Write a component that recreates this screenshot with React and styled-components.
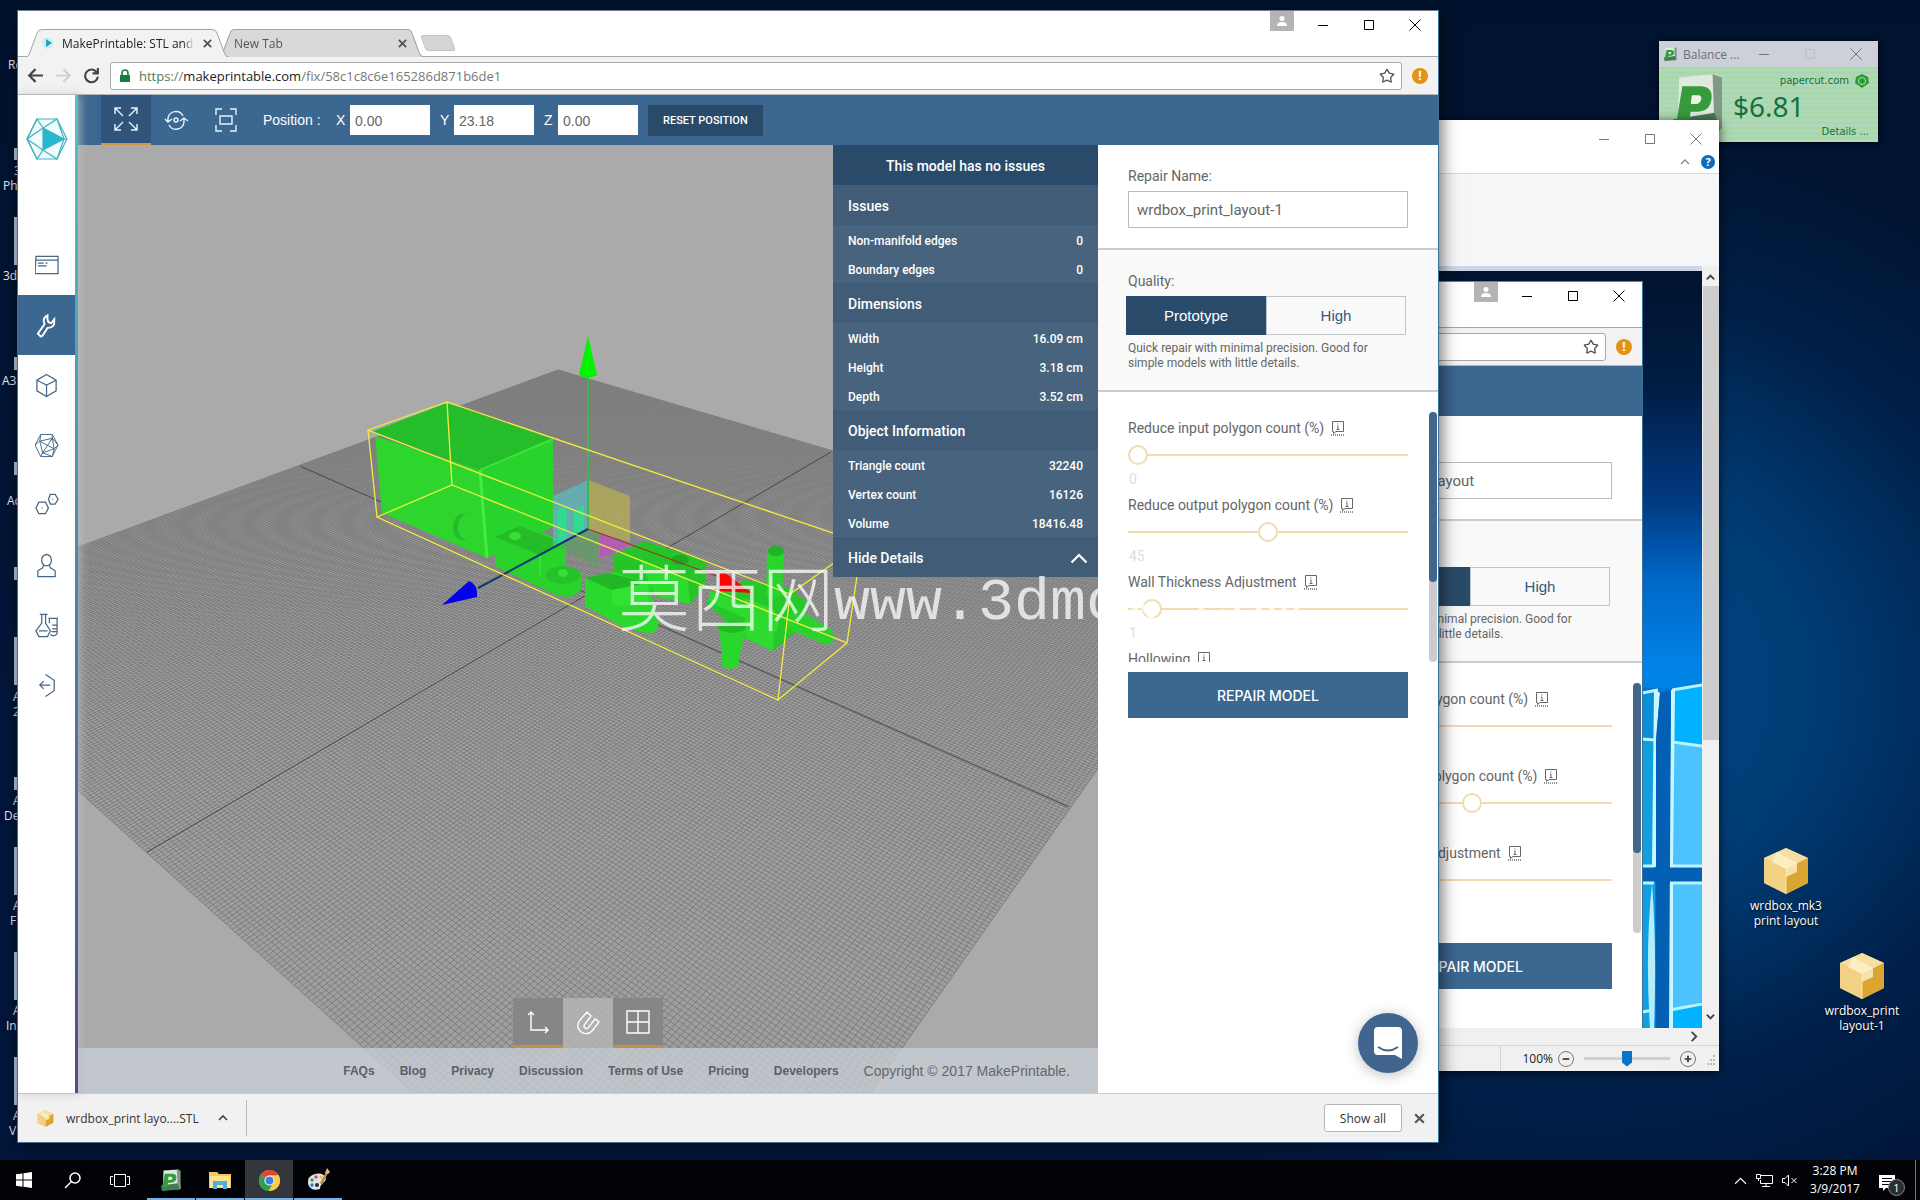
import React, { useId, useState } from 'react';
import styled, { createGlobalStyle, css } from 'styled-components';
import { Star } from 'lucide-react';

const GlobalStyle = createGlobalStyle`
  * { box-sizing: border-box; }
  body { margin: 0; overflow: hidden; }
  button, input { font-family: inherit; margin: 0; }
  button { border: 0; padding: 0; background: none; cursor: pointer; color: inherit; }
  svg { display: block; flex: none; }
`;

/* ---------- desktop ---------- */

const Desktop = styled.div`
  min-height: 100vh;
  display: flex;
  flex-direction: column;
  font-family: 'Open Sans', 'Noto Sans', sans-serif;
  background:
    radial-gradient(ellipse 620px 560px at 82% 57%, #004a8c 0%, rgba(0, 66, 126, 0.85) 40%, rgba(0, 44, 94, 0.45) 72%, rgba(0, 30, 70, 0) 100%),
    linear-gradient(180deg, #00132e 0%, #00163a 60%, #00163a 100%);
`;

const Workspace = styled.div`
  position: relative;
  flex: 1;
  overflow: hidden;
`;

const Shortcut = styled.div`
  position: absolute;
  left: ${(p) => p.$x}px;
  top: ${(p) => p.$y}px;
  width: 90px;
  display: flex;
  flex-direction: column;
  align-items: center;
  gap: 3px;
  color: #fff;
  font-size: 12px;
  line-height: 15px;
  text-align: center;
  text-shadow: 0 1px 2px #000;
`;

const CutLabel = styled.div`
  position: absolute;
  left: ${(p) => p.$x}px;
  top: ${(p) => p.$y}px;
  color: #e8eef5;
  font-size: 12px;
  line-height: 16px;
  white-space: nowrap;
`;

const IconSliver = styled.div`
  position: absolute;
  left: 14px;
  top: ${(p) => p.$y}px;
  width: 4px;
  height: ${(p) => p.$h}px;
  background: #b9cbe0;
`;

const labels = [
  [8, 57, 'Re'], [14, 163, '3'], [3, 178, 'Ph'], [3, 268, '3d'], [2, 373, 'A3'], [7, 493, 'Ac'],
  [13, 689, 'A'], [13, 704, '2'], [13, 793, 'A'], [4, 808, 'De'], [13, 898, 'A'], [10, 913, 'F'],
  [13, 1003, 'A'], [6, 1018, 'In'], [13, 1108, 'A'], [9, 1123, 'V'],
];

const slivers = [[148, 12], [217, 48], [357, 13], [462, 13], [567, 13], [637, 48], [777, 13], [847, 48], [952, 48], [1057, 48]];

function BoxIcon({ size = 48 }) {
  return (
    <svg width={size} height={size} viewBox="0 0 48 48">
      <path d="M24 1 46 11V36L24 47 2 36V11Z" fill="#e8b94c" />
      <path d="M24 1 46 11 24 22 2 11Z" fill="#f6dfa0" />
      <path d="M2 11 24 22V47L2 36Z" fill="#f3d184" />
      <path d="M24 22 46 11V36L24 47Z" fill="#dba531" />
      <path d="M15 5 35 16V25L24 30V22L10 15Z" fill="#fdf1c9" opacity=".8" />
      <path d="M24 22V47" stroke="#fbe6ae" strokeWidth="1" />
    </svg>
  );
}

/* ---------- balance widget ---------- */

const Balance = styled.section`
  position: absolute;
  right: 42px;
  top: 41px;
  width: 219px;
  height: 101px;
  background: #a9d8ae;
  color: #14713f;
  font-family: 'DejaVu Sans', sans-serif;
  box-shadow: 0 1px 5px #000;
`;

const BalanceTitle = styled.header`
  display: flex;
  align-items: center;
  height: 26px;
  padding: 0 16px 0 5px;
  background: #ccd0d8;
  color: #6a7078;
  font: 12px 'Open Sans', sans-serif;
`;

const BalanceName = styled.span`
  flex: 1;
  padding-left: 6px;
`;

const BalanceBody = styled.div`
  display: grid;
  grid-template-columns: 60px 1fr;
  height: 75px;
  padding: 6px 9px 4px 14px;
  background: repeating-linear-gradient(180deg, #a4dba4 0 2px, #b2d6bb 2px 5px);
`;

const BalanceInfo = styled.div`
  display: flex;
  flex-direction: column;
`;

const BalanceLink = styled.a`
  display: flex;
  align-items: center;
  justify-content: flex-end;
  gap: 6px;
  color: #14713f;
  font-size: 10px;
  line-height: 16px;
  text-decoration: none;
`;

const BalanceAmount = styled.strong`
  font: 400 28px 'Noto Sans', sans-serif;
  line-height: 35px;
`;

function PaperIcon({ size, height }) {
  return (
    <svg width={size} height={height || size} viewBox="0 0 48 56" preserveAspectRatio="none">
      <path d="M6 4 42 1 47 50 4 55Z" fill="#dfe9dd" />
      <path d="M38 1 47 4V50L40 54Z" fill="#7d9a84" />
      <path d="M0 42 40 36 45 52 2 56Z" fill="#447c55" />
      <path d="M9 12H26Q38 12 37 23T24 35H17L15 46H3Z" fill="#379a3c" />
      <path d="M18 20H24Q28 20 27 24T22 28H17Z" fill="#e9f3e6" />
    </svg>
  );
}

/* ---------- window buttons ---------- */

const WinButtons = styled.div`
  display: flex;
  gap: ${(p) => p.$gap || 34}px;
  color: ${(p) => p.$color || '#000'};
`;

function Glyph({ d, size = 12, stroke = 1, color = 'currentColor', box = 12 }) {
  return (
    <svg width={size} height={size} viewBox={`0 0 ${box} ${box}`} fill="none" stroke={color} strokeWidth={stroke}>
      <path d={d} />
    </svg>
  );
}

function Controls({ color, gap, faded }) {
  return (
    <WinButtons $color={color} $gap={gap}>
      <button aria-label="Minimize"><Glyph d="M1 6.5H11" /></button>
      <button aria-label="Maximize"><Glyph d="M1.5 1.5H10.500V10.500H1.500Z" color={faded ? '#b9bec6' : 'currentColor'} /></button>
      <button aria-label="Close"><Glyph d="M.5 .5 11.500 11.500M11.500 .5 .5 11.500" /></button>
    </WinButtons>
  );
}

/* ---------- browser frame ---------- */

const Browser = styled.section`
  position: absolute;
  display: flex;
  flex-direction: column;
  background: #fff;
  border: 1px solid #3b7197;
  border-top-color: #6e7f92;
  overflow: hidden;
  ${(p) => p.$main ? css`
    left: 17px;
    right: 481px;
    top: 10px;
    bottom: 17px;
  ` : css`
    right: 59px;
    top: 10px;
    width: 540px;
    height: 1133px;
  `}
`;

const BrowserShadow = styled.div`
  position: absolute;
  left: 17px;
  right: 481px;
  top: 10px;
  bottom: 17px;
  box-shadow: 2px 2px 16px rgba(0, 0, 0, 0.6);
`;

const TabStrip = styled.header`
  display: flex;
  justify-content: space-between;
  height: 46px;
  border-bottom: 1px solid #a6a6a6;
`;

const Tabs = styled.div`
  display: flex;
  align-items: flex-end;
  padding-left: 7px;
`;

const TabBox = styled.div`
  position: relative;
  width: ${(p) => (p.$active ? 204 : 206)}px;
  height: 28px;
  margin: 0 -11px -1px 0;
  z-index: ${(p) => (p.$active ? 2 : 1)};
  display: flex;
  align-items: center;
  padding: 0 16px 0 16px;
  gap: 8px;
  font-size: 12px;
  color: ${(p) => (p.$active ? '#222' : '#555')};
`;

const TabShape = styled.svg`
  position: absolute;
  inset: 0;
  width: 100%;
  height: 100%;
`;

const TabText = styled.span`
  position: relative;
  flex: 1;
  overflow: hidden;
  white-space: nowrap;
  mask-image: linear-gradient(90deg, #000 92%, transparent);
`;

const TabIcon = styled.span`
  position: relative;
`;

const NewTab = styled.button`
  width: 30px;
  height: 16px;
  margin: 0 0 5px 10px;
  background: #d5d5d5;
  border: 1px solid #c2c2c2;
  border-radius: 3px;
  transform: skewX(20deg);
`;

const FrameRight = styled.div`
  display: flex;
  align-items: flex-start;
  padding-right: 17px;
`;

const Person = styled.button`
  display: grid;
  place-items: center;
  width: 24px;
  height: 20px;
  margin-right: 23px;
  background: #b4b4b4;
`;

const ControlSlot = styled.div`
  padding-top: 8px;
`;

const AddressBar = styled.div`
  display: flex;
  align-items: center;
  height: 38px;
  padding: 0 10px 0 9px;
  gap: 10px;
  background: #f2f2f2;
  border-bottom: 1px solid #b0b6bb;
`;

const NavButtons = styled.div`
  display: flex;
  align-items: center;
  gap: 11px;
  color: #444;
`;

const UrlField = styled.div`
  flex: 1;
  display: flex;
  align-items: center;
  gap: 8px;
  height: 28px;
  padding: 0 6px 0 8px;
  background: #fff;
  border: 1px solid #a8a8a8;
  border-radius: 3px;
  font-size: 13px;
  color: #777;
`;

const Url = styled.a`
  flex: 1;
  color: #777;
  text-decoration: none;
  white-space: nowrap;
  b { font-weight: 400; color: #222; }
  i { font-style: normal; color: #4d7a5d; }
`;

const Extension = styled.button`
  width: 16px;
  height: 16px;
  border-radius: 50%;
  background: #e39316;
  color: #fff;
  font-size: 12px;
  font-weight: 700;
  line-height: 16px;
`;

function Tab({ title, active }) {
  return (
    <TabBox $active={active}>
      <TabShape viewBox="0 0 204 28" preserveAspectRatio="none">
        <path d="M0 28 C3 28 4 26 5 23L12 4Q13 .5 17 .5H187Q191 .5 192 4L199 23C200 26 201 28 204 28" fill={active ? '#f2f2f2' : '#d9d9d9'} stroke="#a3a3a3" />
      </TabShape>
      {active && (
        <TabIcon>
          <svg width="13" height="14" viewBox="0 0 13 14"><circle cx="6.500" cy="7" r="6" fill="#cdeef5" /><path d="M5 3 11 7 5 11Z" fill="#1fa3bd" /></svg>
        </TabIcon>
      )}
      <TabText>{title}</TabText>
      <TabIcon as="button" aria-label={`Close ${title}`}><Glyph d="M2 2 10 10M10 2 2 10" size={11} stroke={2} color="#555" /></TabIcon>
    </TabBox>
  );
}

function BrowserTop({ full }) {
  return (
    <>
      <TabStrip>
        <Tabs>
          {full && (
            <>
              <Tab title="MakePrintable: STL and 3" active />
              <Tab title="New Tab" />
              <NewTab aria-label="New tab" />
            </>
          )}
        </Tabs>
        <FrameRight>
          <Person aria-label="Profile">
            <svg width="12" height="12" viewBox="0 0 12 12" fill="#fff"><circle cx="6" cy="3.500" r="2.500" /><path d="M1 11Q1 7 6 7T11 11Z" /></svg>
          </Person>
          <ControlSlot><Controls /></ControlSlot>
        </FrameRight>
      </TabStrip>
      <AddressBar>
        {full && (
          <NavButtons>
            <button aria-label="Back"><Glyph d="M15 8H2M8 2 2 8 8 14" box={16} size={17} stroke={2} /></button>
            <button aria-label="Forward"><Glyph d="M1 8H14M8 2 14 8 8 14" box={16} size={17} stroke={2} color="#d0d0d0" /></button>
            <button aria-label="Reload"><Glyph d="M13 5A6 6 0 1 0 14 9M14 1V6H9" box={16} size={17} stroke={2} /></button>
          </NavButtons>
        )}
        <UrlField>
          {full && (
            <svg width="12" height="14" viewBox="0 0 12 14"><path d="M1 6H11V13H1Z" fill="#128043" /><path d="M3 6V4A3 3 0 0 1 9 4V6" fill="none" stroke="#128043" strokeWidth="1.600" /></svg>
          )}
          <Url href="#fix">{full && <><i>https</i>://<b>makeprintable.com</b>/fix/58c1c8c6e165286d871b6de1</>}</Url>
          <button aria-label="Bookmark"><Star size={16} color="#555" /></button>
        </UrlField>
        <Extension aria-label="Extension">!</Extension>
      </AddressBar>
    </>
  );
}

/* ---------- repair panel ---------- */

const Panel = styled.aside`
  width: 340px;
  flex: none;
  background: #fff;
  color: #666;
  font-family: Roboto, sans-serif;
`;

const PanelSection = styled.div`
  padding: 22px 30px 20px;
  border-bottom: 2px solid #ccc;
  background: ${(p) => (p.$shade ? '#f9f9f9' : '#fff')};
`;

const FieldLabel = styled.label`
  display: flex;
  align-items: center;
  gap: 7px;
  font-size: 14px;
  line-height: 18px;
`;

const NameInput = styled.input`
  display: block;
  width: 100%;
  height: 37px;
  margin-top: 6px;
  padding: 0 8px;
  border: 1px solid #bbb;
  color: #666;
  font-size: 15px;
`;

const Choice = styled.div`
  display: grid;
  grid-template-columns: 1fr 1fr;
  height: 39px;
  margin: 6px 2px 6px -2px;
`;

const ChoiceButton = styled.button`
  border: 1px solid ${(p) => (p.$on ? '#294b69' : '#bfc5ca')};
  background: ${(p) => (p.$on ? '#294b69' : '#f9f9f9')};
  color: ${(p) => (p.$on ? '#fff' : '#34597a')};
  font-size: 15px;
  font-family: 'Liberation Sans', sans-serif;
`;

const Hint = styled.p`
  margin: 0 0 -1px;
  padding-right: 30px;
  font-size: 12px;
  line-height: 15px;
`;

const Settings = styled.div`
  position: relative;
  height: 270px;
  padding: 27px 30px 0;
  overflow: hidden;
`;

const Setting = styled.div`
  height: 77px;
  display: flex;
  flex-direction: column;
`;

const Slider = styled.input`
  appearance: none;
  width: 100%;
  height: 20px;
  margin: 8px 0 5px;
  background: linear-gradient(#f1dcae, #f1dcae) center / 100% 2px no-repeat;
  &::-webkit-slider-thumb {
    appearance: none;
    width: 20px;
    height: 20px;
    border: 2px solid #f1dcae;
    border-radius: 50%;
    background: #fff;
  }
`;

const Value = styled.output`
  padding-left: 1px;
  color: #ddd;
  font-size: 14px;
  line-height: 18px;
`;

const Rail = styled.div`
  position: absolute;
  top: 20px;
  right: 1px;
  width: 8px;
  bottom: 0;
  border-radius: 4px;
  background: #ccc;
`;

const Thumb = styled.div`
  height: 170px;
  border-radius: 4px;
  background: #41658b;
`;

const RepairButton = styled.button`
  display: block;
  width: calc(100% - 60px);
  height: 46px;
  margin: 10px 30px;
  background: #3c6791;
  color: #fff;
  font-size: 14px;
  font-weight: 500;
  font-family: Inter, sans-serif;
`;

const settings = [
  { name: 'Reduce input polygon count (%)', value: 0, max: 90 },
  { name: 'Reduce output polygon count (%)', value: 45, max: 90 },
  { name: 'Wall Thickness Adjustment', value: 1, max: 18 },
  { name: 'Hollowing', value: 0, max: 10 },
];

function InfoIcon() {
  return (
    <svg width="14" height="15" viewBox="0 0 14 15" fill="none" stroke="#666">
      <path d="M1.500 .5H12.500V10.500H5L2.500 12.500V10.500H1.500ZM7 5V8M5.500 8.500H8.500M6 5H7M7 2.500V3.500" />
      <path d="M0 14H14" stroke="#222" strokeDasharray="1 1" />
    </svg>
  );
}

function SliderSetting({ name, value, max }) {
  const id = useId();
  const [current, setCurrent] = useState(value);
  return (
    <Setting>
      <FieldLabel htmlFor={id}>{name} <InfoIcon /></FieldLabel>
      <Slider id={id} type="range" min="0" max={max} value={current} onChange={(e) => setCurrent(e.target.value)} />
      <Value htmlFor={id}>{current}</Value>
    </Setting>
  );
}

function RepairPanel({ name }) {
  const id = useId();
  const [quality, setQuality] = useState('Prototype');
  return (
    <Panel>
      <PanelSection>
        <FieldLabel htmlFor={id}>Repair Name:</FieldLabel>
        <NameInput id={id} defaultValue={name} />
      </PanelSection>
      <PanelSection $shade>
        <FieldLabel as="span">Quality:</FieldLabel>
        <Choice>
          {['Prototype', 'High'].map((q) => (
            <ChoiceButton key={q} $on={q === quality} onClick={() => setQuality(q)}>{q}</ChoiceButton>
          ))}
        </Choice>
        <Hint>Quick repair with minimal precision. Good for simple models with little details.</Hint>
      </PanelSection>
      <Settings>
        {settings.map((s) => <SliderSetting key={s.name} {...s} />)}
        <Rail><Thumb /></Rail>
      </Settings>
      <RepairButton>REPAIR MODEL</RepairButton>
    </Panel>
  );
}

/* ---------- web app ---------- */

const Page = styled.div`
  flex: 1;
  display: flex;
  min-height: 0;
`;

const Sidebar = styled.nav`
  position: relative;
  z-index: 1;
  width: 60px;
  flex: none;
  padding-right: 3px;
  background: linear-gradient(90deg, #fff 57px, transparent 57px), linear-gradient(#4fc4c8, #4a86a8 50%, #524a90);
  box-shadow: 2px 0 9px rgba(190, 190, 190, 0.8);
`;

const Brand = styled.a`
  display: flex;
  justify-content: center;
  height: 140px;
  padding-top: 21px;
`;

const SideLink = styled.a`
  display: grid;
  place-items: center;
  height: 60px;
  color: ${(p) => (p.$on ? '#fff' : '#476784')};
  background: ${(p) => (p.$on ? '#3c6791' : 'transparent')};
`;

const Main = styled.div`
  flex: 1;
  min-width: 0;
  display: flex;
  flex-direction: column;
`;

const ToolBar = styled.div`
  display: flex;
  align-items: center;
  height: 50px;
  flex: none;
  padding: 0 23px;
  background: #3c6791;
  color: #fff;
  font: 14px 'Liberation Sans', sans-serif;
`;

const ModeButton = styled.button`
  display: grid;
  place-items: center;
  width: 50px;
  height: 50px;
  color: #e8f3fb;
  ${(p) => p.$on && css`
    background: #31557a;
    border-bottom: 2px solid #d8963a;
  `}
`;

const Coordinates = styled.fieldset`
  display: flex;
  align-items: center;
  gap: 10px;
  margin: 0 0 0 12px;
  padding: 0;
  border: 0;
`;

const CoordTitle = styled.span`
  width: 63px;
`;

const Coord = styled.label`
  display: flex;
  align-items: center;
  gap: 5px;
`;

const Axis = styled.span`
  width: 9px;
`;

const CoordInput = styled.input`
  width: 80px;
  height: 30px;
  padding: 2px 5px 0;
  border: 0;
  color: #666;
  font-size: 14px;
`;

const ResetButton = styled.button`
  height: 31px;
  padding: 0 15px;
  background: #294b69;
  font: 500 11px Roboto, sans-serif;
`;

const Stage = styled.div`
  flex: 1;
  display: flex;
  min-height: 0;
`;

const Viewport = styled.div`
  position: relative;
  flex: 1;
  min-width: 0;
  display: flex;
  flex-direction: column;
  justify-content: space-between;
  background: #aaa;
`;

const SceneSvg = styled.svg`
  position: absolute;
  inset: 0;
  width: 100%;
  height: 100%;
`;

const Details = styled.section`
  position: relative;
  align-self: flex-end;
  width: 265px;
  background: #48637d;
  color: #fff;
  font: 500 12px Roboto, sans-serif;
`;

const DetailsHead = styled.h2`
  margin: 0;
  padding-top: 2px;
  font-size: 14px;
  font-weight: 500;
  line-height: 38px;
  text-align: center;
  background: #294b69;
`;

const GroupHead = styled.h3`
  display: flex;
  align-items: center;
  justify-content: space-between;
  margin: 0;
  padding: 2px 15px 0;
  font-size: 14px;
  font-weight: 500;
  line-height: 38px;
  background: #405c77;
`;

const GroupToggle = styled(GroupHead)`
  width: 100%;
  padding-right: 10px;
`;

const Row = styled.div`
  display: flex;
  justify-content: space-between;
  padding: 4px 15px 0;
  line-height: 25px;
`;

const BottomArea = styled.div`
  position: relative;
  display: flex;
  flex-direction: column;
  align-items: center;
`;

const ViewTools = styled.div`
  display: flex;
`;

const ViewButton = styled.button`
  display: grid;
  place-items: center;
  width: 50px;
  height: 50px;
  color: #fff;
  background: ${(p) => (p.$on ? '#868686' : 'rgba(180, 180, 180, 0.85)')};
  border-bottom: ${(p) => (p.$on ? '3px solid #c48e4b' : '0')};
`;

const Footer = styled.footer`
  display: flex;
  align-items: center;
  justify-content: flex-end;
  gap: 25px;
  align-self: stretch;
  height: 45px;
  padding: 0 28px;
  background: rgba(200, 208, 216, 0.75);
  color: #666;
  font: 14px 'Liberation Sans', sans-serif;
  white-space: nowrap;
`;

const FooterLink = styled.a`
  color: #5c6064;
  font-size: 12px;
  font-weight: 700;
  text-decoration: none;
`;

const Watermark = styled.div`
  position: absolute;
  left: 600px;
  top: 530px;
  display: flex;
  align-items: center;
  color: rgba(255, 255, 255, 0.75);
  font: 300 72px 'Noto Sans CJK SC', sans-serif;
  white-space: nowrap;
  pointer-events: none;
`;

const WatermarkUrl = styled.span`
  padding-top: 19px;
  font: 60px 'Liberation Mono', monospace;
`;

const Chat = styled.button`
  position: absolute;
  right: 20px;
  bottom: 69px;
  display: grid;
  place-items: center;
  width: 60px;
  height: 60px;
  border-radius: 50%;
  background: #41658f;
  box-shadow: 0 2px 14px rgba(0, 0, 0, 0.25);
`;

const Downloads = styled.footer`
  display: flex;
  align-items: center;
  height: 49px;
  padding: 0 12px 0 19px;
  background: #f1f1f1;
  border-top: 1px solid #ccc;
  font-size: 12px;
  color: #333;
`;

const DownloadItem = styled.button`
  display: flex;
  align-items: center;
  gap: 12px;
  height: 36px;
  padding-right: 17px;
  border-right: 1px solid #bbb;
  font-size: 12px;
`;

const Chevron = styled.span`
  margin-left: 6px;
`;

const ShowAll = styled.button`
  width: 78px;
  height: 28px;
  margin: 0 11px 0 auto;
  background: #fff;
  border: 1px solid #b5b5b5;
  border-radius: 3px;
  font-size: 12px;
`;

const detailGroups = [
  ['Issues', [['Non-manifold edges', '0'], ['Boundary edges', '0']]],
  ['Dimensions', [['Width', '16.09 cm'], ['Height', '3.18 cm'], ['Depth', '3.52 cm']]],
  ['Object Information', [['Triangle count', '32240'], ['Vertex count', '16126'], ['Volume', '18416.48']]],
];

const footerLinks = ['FAQs', 'Blog', 'Privacy', 'Discussion', 'Terms of Use', 'Pricing', 'Developers'];

/* the build plate: a square grid seen through a homography */
const plate = [[558, 370], [1237, 570], [694, 1345], [-114, 618]];

function project(u, v) {
  const [[x0, y0], [x1, y1], [x2, y2], [x3, y3]] = plate;
  const dx1 = x1 - x2, dx2 = x3 - x2, dx3 = x0 - x1 + x2 - x3;
  const dy1 = y1 - y2, dy2 = y3 - y2, dy3 = y0 - y1 + y2 - y3;
  const det = dx1 * dy2 - dx2 * dy1;
  const g = (dx3 * dy2 - dx2 * dy3) / det;
  const h = (dx1 * dy3 - dx3 * dy1) / det;
  const w = g * u + h * v + 1;
  const x = ((x1 - x0 + g * x1) * u + (x3 - x0 + h * x3) * v + x0) / w;
  const y = ((y1 - y0 + g * y1) * u + (y3 - y0 + h * y3) * v + y0) / w;
  return `${x.toFixed(1)} ${y.toFixed(1)}`;
}

const CELLS = 270;
const gridPath = Array.from({ length: CELLS + 1 }, (_, i) => {
  const t = i / CELLS;
  return `M${project(t, 0)}L${project(t, 1)}M${project(0, t)}L${project(1, t)}`;
}).join('');

function Scene() {
  return (
    <SceneSvg viewBox="78 145 1020 948" preserveAspectRatio="xMidYMid slice">
      <path d="M558 370 1237 570 694 1345-114 618Z" fill="#9f9f9f" />
      <path d={gridPath} fill="none" stroke="#7d7d7d" strokeWidth="1" />
      <path d="M300 466 1069 807M147 852 831 452" stroke="#484848" />
      {/* hollow box */}
      <path d="M371 432 447 403 553 439 480 470Z" fill="#26bd2a" />
      <path d="M375 436 480 470 487 558 382 513Z" fill="#2dd52d" />
      <path d="M480 470 553 439V527L487 558Z" fill="#28d42b" />
      <path d="M480 470 487 558" stroke="#45ea45" strokeWidth="3" />
      <path d="M480 470 553 439" stroke="#3fe03f" strokeWidth="2" />
      <ellipse cx="463" cy="527" rx="10" ry="13" fill="#25bb29" />
      <ellipse cx="466" cy="527" rx="8" ry="12" fill="#30d531" />
      {/* slotted bracket */}
      <path d="M495 537 520 526 548 534 566 546V566L581 573V590Q570 602 552 593L495 566Z" fill="#2ad32c" />
      <path d="M495 537 520 526 560 542 540 555Z" fill="#24bd28" />
      <ellipse cx="515" cy="536" rx="6" ry="4" fill="#38df39" />
      <ellipse cx="563" cy="575" rx="17" ry="9" fill="#25c229" />
      <ellipse cx="563" cy="573" rx="5" ry="4" fill="#38df39" />
      <path d="M540 555V575" stroke="#45ea45" />
      {/* hinge plates */}
      <path d="M613 556 644 541 706 561V585L690 604 655 596 614 578Z" fill="#25c529" />
      <path d="M640 560 688 580 690 604 655 596Z" fill="#2cdc2e" />
      <ellipse cx="680" cy="560" rx="9" ry="5" fill="#20a925" />
      <path d="M585 578 614 572 650 583 655 615Q664 628 650 634L625 628 585 606Z" fill="#2bd82d" />
      <path d="M585 578 608 573 648 583 612 590Z" fill="#23b627" />
      <path d="M612 590 648 583V605L612 606Z" fill="#30e332" />
      {/* body, pins and rod */}
      <path d="M705 602 745 580 790 588 808 603 798 630 773 651 745 638Z" fill="#27c82a" />
      <path d="M745 598 775 610 773 651 745 638Z" fill="#2edc30" />
      <path d="M709 590 780 618 776 632 709 602Z" fill="#2ddb2f" />
      <path d="M767 551 784 551 782 597H766Z" fill="#29d42b" />
      <ellipse cx="776" cy="551" rx="8" ry="5" fill="#22b226" />
      <path d="M793 606 832 630Q838 642 826 645L786 628Z" fill="#2ad32c" />
      <path d="M718 625Q732 618 746 625L742 645 738 666Q730 672 722 666L721 645Z" fill="#2ad62c" />
      <ellipse cx="732" cy="627" rx="14" ry="6" fill="#22b827" />
      {/* move gizmo */}
      <path d="M553 496 588 480V529L553 546Z" fill="#4fc9cf" opacity=".6" />
      <path d="M588 480 630 496V542L588 529Z" fill="#c2b84a" opacity=".62" />
      <path d="M600 534 630 545 600 558Z" fill="#c34fc0" opacity=".75" />
      <path d="M560 547 588 529 600 535 597 567Z" fill="#5aa05c" opacity=".65" />
      <path d="M557 510Q562 504 567 510L566 540 558 543ZM574 512 584 505V530L574 535Z" fill="#25e58a" opacity=".8" />
      <path d="M588 374V529" stroke="#3fb84a" strokeWidth="2" />
      <path d="M588 336 597 375Q588 380 579 375Z" fill="#00f400" />
      <path d="M588 529 478 588" stroke="#0b3a72" strokeWidth="2" />
      <path d="M442 605 469 581Q478 584 477 597Z" fill="#0400ee" />
      <path d="M588 529 722 578" stroke="#a8271b" strokeWidth="1" />
      <path d="M719 574Q724 570 729 576L752 593 719 591Z" fill="#f70500" />
      {/* bounding box */}
      <path d="M368 430 447 402 862 543 790 594ZM377 517 452 485 847 643 778 700ZM368 430 377 517M447 402 452 485M862 543 847 643M790 594 778 700" fill="none" stroke="#f2ee3c" strokeWidth="1.300" />
    </SceneSvg>
  );
}

function SideIcon({ kind }) {
  const shapes = {
    projects: <path d="M1 3H24V21H0ZM1 7H24M3 10H9M11 10H13M3 13H12" />,
    repair: <path d="M13 2Q9 4 9 8L10 11 3 21 6 24 8 23 13 15Q18 15 20 11L20 6 17 10 14 9 13 6Z" strokeWidth="2" />,
    cube: <path d="M12 1 22 7V18L12 24 2 18V7ZM2 7 12 12 22 7M12 12V24" />,
    mesh: <path d="M6 1H18L24 12 18 24H6L0 12ZM6 1 5 8 18 5 20 16 8 20 5 8M18 1V5L24 12 20 16 18 24 8 20 6 24M0 12 5 8M18 5 8 20M5 8 20 16" strokeWidth="1" />,
    nodes: <path d="M4 9H11L14 15 11 21H4L1 15ZM16 1H21L24 6 21 11H16L14 6ZM7 15H8M18 6H19" />,
    user: <path d="M12 1Q17 2 17 7T12 13Q7 12 7 7T12 1ZM9 12 8 15 3 18V24H21V18L16 15 15 12" />,
    lab: <path d="M5 1H13M7 1V10L1 18 4 24H13L16 18 11 10V1M4 18H13M14 5H24M15 5V10M23 5V21Q20 25 16 22M18 12H23M18 16H23M17 19H23" />,
    exit: <path d="M11 1 20 7V18L11 24M16 12H5M9 8 5 12 9 16" />,
  };
  return <svg width="24" height="25" viewBox="0 0 25 25" fill="none" stroke="currentColor" strokeWidth="1.300">{shapes[kind]}</svg>;
}

function ToolIcon({ d, children, width = 1.4 }) {
  return (
    <svg width="24" height="24" viewBox="0 0 24 24" fill="none" stroke="currentColor" strokeWidth={width}>
      <path d={d} />
      {children}
    </svg>
  );
}

function MakePrintable() {
  return (
    <Page>
      <Sidebar>
        <Brand href="#home" aria-label="MakePrintable">
          <svg width="42" height="46" viewBox="0 0 42 46" fill="none" stroke="#3fb2c4" strokeWidth="1.200">
            <path d="M11 3H31L41 23 31 43H11L1 23Z" fill="#f2fbfc" />
            <path d="M17 12V34L38 23Z" fill="#27b7cf" />
            <path d="M17 12 11 3 1 23 17 12 31 3 38 23 41 23M17 34 1 23 11 43 17 34 31 43 38 23" />
          </svg>
        </Brand>
        {['projects', 'repair', 'cube', 'mesh', 'nodes', 'user', 'lab', 'exit'].map((kind) => (
          <SideLink key={kind} href={`#${kind}`} aria-label={kind} $on={kind === 'repair'}><SideIcon kind={kind} /></SideLink>
        ))}
      </Sidebar>
      <Main>
        <ToolBar>
          <ModeButton $on aria-label="Move"><ToolIcon d="M1 7V1H7M1 1 9 9M17 1H23V7M23 1 15 9M1 17V23H7M1 23 9 15M17 23H23V17M23 23 15 15" /></ModeButton>
          <ModeButton aria-label="Rotate"><ToolIcon d="M19 8A8 8 0 0 0 4 10V14M1 11 4 14 8 11M5 17A8 8 0 0 0 20 14V10M16 13 20 10 24 13"><circle cx="12" cy="12" r="2" /></ToolIcon></ModeButton>
          <ModeButton aria-label="Scale"><ToolIcon d="M2 7V1H8M16 1H22V7M22 17V23H16M8 23H2V17M6 8H18V16H6Z" /></ModeButton>
          <Coordinates>
            <CoordTitle>Position :</CoordTitle>
            {[['X', '0.00'], ['Y', '23.18'], ['Z', '0.00']].map(([axis, v]) => (
              <Coord key={axis}><Axis>{axis}</Axis><CoordInput defaultValue={v} /></Coord>
            ))}
            <ResetButton>RESET POSITION</ResetButton>
          </Coordinates>
        </ToolBar>
        <Stage>
          <Viewport>
            <Scene />
            <Details>
              <DetailsHead>This model has no issues</DetailsHead>
              {detailGroups.map(([title, rows]) => (
                <div key={title}>
                  <GroupHead>{title}</GroupHead>
                  {rows.map(([k, v]) => <Row key={k}><span>{k}</span><span>{v}</span></Row>)}
                </div>
              ))}
              <GroupToggle as="button">Hide Details <Glyph d="M1 9 6 4 11 9" size={18} stroke={1.5} /></GroupToggle>
            </Details>
            <BottomArea>
              <ViewTools>
                <ViewButton $on aria-label="Axes"><ToolIcon d="M5 2V20H22M2 5 5 2 8 5M19 17 22 20 19 23" /></ViewButton>
                <ViewButton aria-label="Snap"><ToolIcon d="M11 1 4 9A7 7 0 1 0 16 20L23 11 19 8 12 17A2 2 0 1 1 9 13L15 5Z" /></ViewButton>
                <ViewButton $on aria-label="Grid"><ToolIcon d="M1 1H23V23H1ZM12 1V23M1 12H23" /></ViewButton>
              </ViewTools>
              <Footer>
                {footerLinks.map((l) => <FooterLink key={l} href="#footer">{l}</FooterLink>)}
                <span>Copyright © 2017 MakePrintable.</span>
              </Footer>
            </BottomArea>
          </Viewport>
          <RepairPanel name="wrdbox_print_layout-1" />
        </Stage>
      </Main>
    </Page>
  );
}

/* ---------- paint window ---------- */

const Paint = styled.section`
  position: absolute;
  right: 201px;
  top: 120px;
  bottom: 89px;
  width: 600px;
  display: flex;
  flex-direction: column;
  background: #fff;
  box-shadow: 0 2px 10px rgba(0, 0, 0, 0.7);
`;

const PaintTitle = styled.header`
  display: flex;
  justify-content: flex-end;
  height: 30px;
  padding: 8px 17px 0;
`;

const PaintTabs = styled.div`
  display: flex;
  align-items: center;
  justify-content: flex-end;
  gap: 10px;
  height: 24px;
  padding-right: 4px;
  border-bottom: 1px solid #d8dadc;
`;

const Help = styled.button`
  width: 14px;
  height: 14px;
  border-radius: 50%;
  background: #0e6dbb;
  color: #fff;
  font-size: 11px;
  font-weight: 700;
  line-height: 14px;
`;

const Ribbon = styled.div`
  height: 92px;
  background: #f5f6f7;
`;

const PaintBody = styled.div`
  flex: 1;
  display: grid;
  grid-template-columns: 1fr 17px;
  grid-template-rows: 1fr 17px;
  min-height: 0;
  background: #f0f0f0;
`;

const PaintCanvas = styled.div`
  position: relative;
  overflow: hidden;
  border-top: 5px solid #cbd7e6;
  background: linear-gradient(180deg, #00132e 0, #001c42 110px, #003a80 230px, #0068c8 310px, #0084e8 400px, #0074d4 460px, #0090e0 760px);
`;

const Panes = styled.svg`
  position: absolute;
  right: 0;
  bottom: 0;
`;

const VScroll = styled.div`
  display: flex;
  flex-direction: column;
  align-items: center;
  justify-content: space-between;
  padding: 6px 1px;
`;

const VThumb = styled.div`
  width: 16px;
  height: 454px;
  margin: 3px 0 auto;
  background: #cdcdcd;
`;

const HScroll = styled.div`
  display: flex;
  align-items: center;
  justify-content: flex-end;
  padding-right: 3px;
`;

const StatusBar = styled.footer`
  display: flex;
  align-items: center;
  justify-content: flex-end;
  gap: 8px;
  height: 26px;
  padding-right: 3px;
  background: #f0f0f0;
  border-top: 1px solid #d6d6d6;
  font-size: 12px;
  color: #222;
`;

const StatusCell = styled.label`
  display: flex;
  align-items: center;
  height: 25px;
  margin-right: -3px;
  padding-left: 21px;
  border-left: 1px solid #d2d2d2;
`;

const Round = styled.button`
  display: grid;
  place-items: center;
  width: 16px;
  height: 16px;
  border: 1px solid #777;
  border-radius: 50%;
`;

const Zoom = styled.input`
  appearance: none;
  width: 86px;
  height: 16px;
  margin: 0 2px;
  background: linear-gradient(#cfcfcf, #cfcfcf) center / 100% 3px no-repeat;
  &::-webkit-slider-thumb {
    appearance: none;
    width: 10px;
    height: 16px;
    background: #0c73c8;
    clip-path: polygon(0 0, 100% 0, 100% 75%, 50% 100%, 0 75%);
  }
`;

const BlueStrip = styled.div`
  height: 50px;
  flex: none;
  background: #3c6791;
`;

const NestedStage = styled.div`
  display: flex;
  justify-content: flex-end;
`;

function PaintWindow() {
  return (
    <Paint>
      <PaintTitle><Controls color="#777" /></PaintTitle>
      <PaintTabs>
        <Glyph d="M2 8 6 4 10 8" size={12} color="#888" stroke={1.3} />
        <Help aria-label="Help">?</Help>
      </PaintTabs>
      <Ribbon />
      <PaintBody>
        <PaintCanvas>
          <Panes width="60" height="348" viewBox="0 0 60 348">
            <rect y="8" width="60" height="340" fill="#0070d0" opacity=".6" />
            <path d="M0 12 16 8 14 187H0Z" fill="#0a8fdc" />
            <path d="M0 58 15 60 13 187H0ZM0 203H13V348H0Z" fill="#119fdf" />
            <path d="M31 10 60 4V187H28Z" fill="#00b2ff" />
            <path d="M30 64 60 66V187H28ZM28 203H60V322L28 330Z" fill="#4cc3ff" />
            <path d="M28 330 60 322V348H28Z" fill="#00b2ff" />
            <path d="M0 13 16 10M0 59 13 60M30 10 60 5M30 62 60 66M0 186H12M0 203H12M28 186H60M28 203H60M0 332 12 330M28 330 60 324" stroke="#b8f4ff" strokeWidth="3" />
            <path d="M12 9 18 13 14 60V187H10ZM29 10H33L31 187H27ZM27 203H31V348H27Z" fill="#c8f8ff" />
            <path d="M10 203Q15 270 12 348H8Q3 270 10 203Z" fill="#b5ecfa" />
            <path d="M0 188H60V201H0ZM18 13 29 10 27 348H14V60Z" fill="#0460b4" />
          </Panes>
          <Browser>
            <BrowserTop />
            <BlueStrip />
            <NestedStage><RepairPanel name="wrdbox_print_layout" /></NestedStage>
          </Browser>
        </PaintCanvas>
        <VScroll>
          <Glyph d="M2 8 6 4 10 8" size={11} color="#444" stroke={2} />
          <VThumb />
          <Glyph d="M2 4 6 8 10 4" size={11} color="#444" stroke={2} />
        </VScroll>
        <HScroll><Glyph d="M4 1 9 6 4 11" size={11} color="#444" stroke={2} /></HScroll>
      </PaintBody>
      <StatusBar>
        <StatusCell htmlFor="zoom">100%</StatusCell>
        <Round aria-label="Zoom out"><Glyph d="M2 6H10" size={10} stroke={2} color="#333" /></Round>
        <Zoom id="zoom" type="range" defaultValue="50" />
        <Round aria-label="Zoom in"><Glyph d="M2 6H10M6 2V10" size={10} stroke={2} color="#333" /></Round>
        <Glyph d="M10 2V4M10 6V8M7 6V8M10 10V12M7 10V12M4 10V12" size={12} stroke={2} color="#bbb" />
      </StatusBar>
    </Paint>
  );
}

/* ---------- taskbar ---------- */

const TaskBar = styled.nav`
  display: flex;
  height: 40px;
  flex: none;
  background: #020306;
  color: #fff;
`;

const TaskButton = styled.button`
  display: grid;
  place-items: center;
  width: 48px;
  height: 40px;
`;

const Apps = styled.div`
  display: flex;
  gap: 1px;
  margin-left: 3px;
`;

const AppButton = styled(TaskButton)`
  background: ${(p) => (p.$on ? '#33373d' : 'transparent')};
  box-shadow: inset 0 -2px #76b0e4;
`;

const Tray = styled.div`
  display: flex;
  align-items: center;
  gap: 9px;
  margin-left: auto;
`;

const Clock = styled.time`
  width: 56px;
  font-size: 12px;
  line-height: 18px;
  text-align: center;
`;

const Notices = styled.button`
  position: relative;
  width: 34px;
  height: 40px;
  padding: 6px 0 0 7px;
`;

const Badge = styled.span`
  position: absolute;
  right: 1px;
  bottom: 4px;
  width: 17px;
  height: 17px;
  border: 1px solid #888;
  border-radius: 50%;
  background: #2a2d33;
  font-size: 11px;
  line-height: 15px;
`;

const PeekEdge = styled.div`
  width: 5px;
  height: 40px;
  border-left: 1px solid #777;
`;

function Taskbar() {
  return (
    <TaskBar>
      <TaskButton aria-label="Start">
        <svg width="16" height="16" viewBox="0 0 16 16" fill="#fff"><path d="M0 2.300 6.500 1.400V7.600H0ZM7.500 1.200 16 0V7.600H7.500ZM0 8.500H6.500V14.700L0 13.800ZM7.500 8.500H16V16L7.500 14.800Z" /></svg>
      </TaskButton>
      <TaskButton aria-label="Search">
        <svg width="17" height="17" viewBox="0 0 17 17" fill="none" stroke="#fff" strokeWidth="1.500"><circle cx="11" cy="6" r="5" /><path d="M7.500 9.500 1 16" /></svg>
      </TaskButton>
      <TaskButton aria-label="Task view">
        <svg width="20" height="15" viewBox="0 0 20 15" fill="none" stroke="#fff"><path d="M4.500 1.500H15.500V13.500H4.500ZM3 3.500H.5V11.500H3M17 3.500H19.500V11.500H17" /></svg>
      </TaskButton>
      <Apps>
        <AppButton aria-label="PaperCut"><PaperIcon size={20} height={22} /></AppButton>
        <AppButton aria-label="File Explorer">
          <svg width="22" height="19" viewBox="0 0 22 19"><path d="M0 1H8L10 3H22V17H0Z" fill="#f0c85a" /><path d="M1 5H21V17H1Z" fill="#fbe391" /><path d="M4 18V10H18V18H14V14H8V18Z" fill="#4fb0dc" /></svg>
        </AppButton>
        <AppButton $on aria-label="Chrome">
          <svg width="23" height="23" viewBox="0 0 24 24">
            <circle cx="12" cy="12" r="11" fill="#f8ce3c" />
            <path d="M12 12 2.500 6.500A11 11 0 0 1 21.500 6.500Z" fill="#dc4538" />
            <path d="M12 12 2.500 6.500A11 11 0 0 0 11 23L16 14Z" fill="#2f9e54" />
            <path d="M12 6.500H21.500A11 11 0 0 1 12 23L16.500 14Z" fill="#f8ce3c" />
            <circle cx="12" cy="12" r="5.300" fill="#fff" /><circle cx="12" cy="12" r="4.200" fill="#3f7de0" />
          </svg>
        </AppButton>
        <AppButton aria-label="Paint">
          <svg width="24" height="24" viewBox="0 0 24 24">
            <path d="M2 16Q1 8 9 6T20 10Q20 13 17 15T14 21Q5 24 2 16Z" fill="#dfe6ea" />
            <circle cx="6" cy="12" r="1.700" fill="#3e9c58" /><circle cx="10" cy="9" r="1.700" fill="#d84c3c" /><circle cx="6" cy="17" r="1.700" fill="#3777c2" /><circle cx="15" cy="9" r="1.600" fill="#edb93b" />
            <circle cx="11" cy="17" r="2" fill="#24303a" />
            <path d="M14 15 20 4 22 5 16 17Z" fill="#b98a55" /><path d="M19 5 21 0 24 4 22 6Z" fill="#e0bb7e" />
          </svg>
        </AppButton>
      </Apps>
      <Tray>
        <Glyph d="M1 9 6 4 11 9" size={13} />
        <svg width="17" height="15" viewBox="0 0 17 15" fill="none" stroke="#fff"><path d="M5 2.500H16.500V10.500H4.500V7M10 10.500V13.500M6 13.500H14M.5 1.500H4.500V5.500H.5ZM2.500 5.500V8" /></svg>
        <svg width="16" height="13" viewBox="0 0 16 13" fill="none" stroke="#fff"><path d="M.5 4.500H3L6.500 1V12L3 8.500H.5ZM9.500 4 14.500 9M14.500 4 9.500 9" /></svg>
        <Clock>3:28 PM<br />3/9/2017</Clock>
        <Notices aria-label="Notifications">
          <svg width="17" height="17" viewBox="0 0 17 17"><path d="M0 0H16V13H7L4 16V13H0Z" fill="#fff" /><path d="M3 3.500H13M3 6.500H13M3 9.500H10" stroke="#020306" /></svg>
          <Badge>1</Badge>
        </Notices>
        <PeekEdge />
      </Tray>
    </TaskBar>
  );
}

function App() {
  return (
    <Desktop>
      <GlobalStyle />
      <Workspace>
        {labels.map(([x, y, text]) => <CutLabel key={y} $x={x} $y={y}>{text}</CutLabel>)}
        {slivers.map(([y, h]) => <IconSliver key={y} $y={y} $h={h} />)}
        <Shortcut $x={1741} $y={847}><BoxIcon />wrdbox_mk3 print layout</Shortcut>
        <Shortcut $x={1817} $y={952}><BoxIcon />wrdbox_print layout-1</Shortcut>

        <Balance>
          <BalanceTitle>
            <PaperIcon size={13} height={14} />
            <BalanceName>Balance ...</BalanceName>
            <Controls color="#777" faded />
          </BalanceTitle>
          <BalanceBody>
            <PaperIcon size={50} height={62} />
            <BalanceInfo>
              <BalanceLink href="#papercut">
                papercut.com
                <svg width="14" height="14" viewBox="0 0 14 14"><path d="M7 0 13 3 14 9 7 14 0 9 1 3Z" fill="#2a9a36" /><circle cx="7" cy="7" r="3.500" fill="none" stroke="#b5e0b2" /></svg>
              </BalanceLink>
              <BalanceAmount>$6.81</BalanceAmount>
              <BalanceLink href="#details">Details ...</BalanceLink>
            </BalanceInfo>
          </BalanceBody>
        </Balance>

        <PaintWindow />

        <BrowserShadow />
        <Browser $main>
          <BrowserTop full />
          <MakePrintable />
          <Downloads>
            <DownloadItem>
              <BoxIcon size={17} />
              wrdbox_print layo....STL
              <Chevron><Glyph d="M2 8 6 4 10 8" size={12} stroke={1.6} color="#444" /></Chevron>
            </DownloadItem>
            <ShowAll>Show all</ShowAll>
            <button aria-label="Close downloads"><Glyph d="M2 2 10 10M10 2 2 10" size={13} stroke={2} color="#555" /></button>
          </Downloads>
          <Watermark>莫西网<WatermarkUrl>www.3dmox.com</WatermarkUrl></Watermark>
          <Chat aria-label="Open chat">
            <svg width="28" height="32" viewBox="0 0 28 32"><path d="M4 0H24Q28 0 28 4V32L21 28H4Q0 28 0 24V4Q0 0 4 0Z" fill="#fff" /><path d="M4 20Q14 27 24 20" fill="none" stroke="#41658f" strokeWidth="2" /></svg>
          </Chat>
        </Browser>
      </Workspace>
      <Taskbar />
    </Desktop>
  );
}

export default App;
